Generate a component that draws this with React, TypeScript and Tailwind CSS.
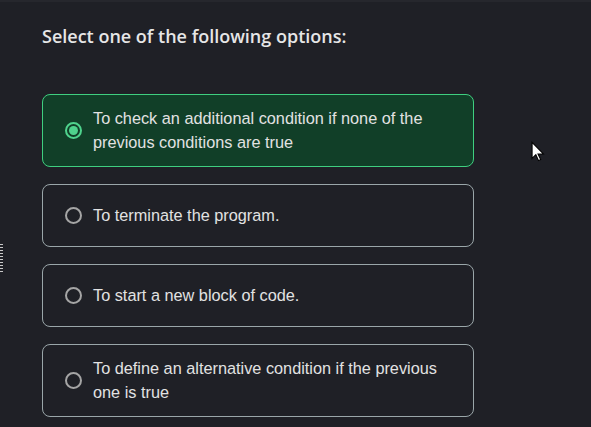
import { useState } from "react";

const options = [
    "To check an additional condition if none of the previous conditions are true",
    "To terminate the program.",
    "To start a new block of code.",
    "To define an alternative condition if the previous one is true",
];

export default function App() {
    const [selected, setSelected] = useState(0);

    return (
        <div className="relative min-h-[427px] w-full overflow-hidden bg-[#1f2026] border-t-2 border-[#26272d]">
            {/* left edge grip */}
            <div className="absolute left-0 top-[242px] flex flex-col gap-[2px]">
                {Array.from({ length: 10 }).map((_, i) => (
                    <div key={i} className="h-px w-[3px] bg-[#c8c8c8]" />
                ))}
            </div>

            <div className="pl-[42px] pt-[22px]">
                <h2 className="text-[18px] font-semibold leading-6 text-[#e6e6e6] [font-family:'Open_Sans',sans-serif]">
                    Select one of the following options:
                </h2>

                <div className="mt-[46px] flex w-[432px] flex-col gap-[17px]">
                    {options.map((text, i) => {
                        const active = i === selected;
                        return (
                            <button
                                key={i}
                                type="button"
                                onClick={() => setSelected(i)}
                                className={
                                    "flex min-h-[63px] items-center gap-[11px] rounded-lg border py-3 pl-[22px] pr-6 text-left " +
                                    (active
                                        ? "border-[#3fcf80] bg-[#113f28]"
                                        : "border-[#9aa6a9] bg-transparent")
                                }
                            >
                                {active ? (
                                    <span className="flex h-[17px] w-[17px] shrink-0 items-center justify-center rounded-full border-2 border-[#4fd38d]">
                                        <span className="h-[9px] w-[9px] rounded-full bg-[#4fd38d]" />
                                    </span>
                                ) : (
                                    <span className="h-[17px] w-[17px] shrink-0 rounded-full border-2 border-[#a5a5a5]" />
                                )}
                                <span className="text-[16.3px] leading-[23.5px] text-[#e2e2e2] [font-family:'Liberation_Sans',Arial,sans-serif]">
                                    {text}
                                </span>
                            </button>
                        );
                    })}
                </div>
            </div>

            {/* mouse cursor */}
            <svg className="absolute left-[531px] top-[139px]" width="14" height="22" viewBox="0 0 13 20">
                <path d="M1 1 L1 16 L4.5 12.5 L7 18 L9 17 L6.5 11.8 L11.5 11.8 Z" fill="#fff" stroke="#000" strokeWidth="1" />
            </svg>
        </div>
    );
}
